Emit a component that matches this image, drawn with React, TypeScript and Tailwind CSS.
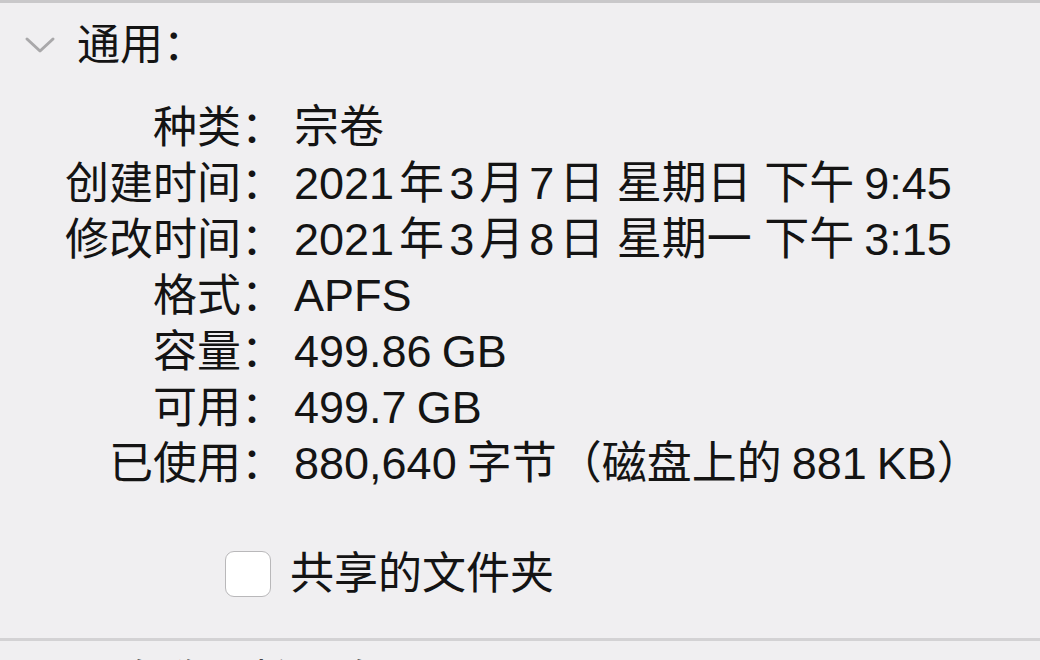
const rows: [string, string][] = [
  ["种类：", "宗卷"],
  ["创建时间：", "2021|年|3|月|7|日 星期日 下午^9:45"],
  ["修改时间：", "2021|年|3|月|8|日 星期一 下午^3:15"],
  ["格式：", "APFS"],
  ["容量：", "499.86^GB"],
  ["可用：", "499.7^GB"],
  ["已使用：", "880,640^字节（磁盘上的^881^KB）"],
];

// "|" = narrow gap, "^" = wider gap (macOS spacing between CJK and Latin)
function Value({ text }: { text: string }) {
  const parts = text.split(/([|^])/);
  return (
    <>
      {parts.map((p, i) =>
        p === "|" ? (
          <span key={i} className="inline-block w-[5px]" />
        ) : p === "^" ? (
          <span key={i} className="inline-block w-[10px]" />
        ) : (
          <span key={i}>{p}</span>
        )
      )}
    </>
  );
}

export default function App() {
  return (
    <div
      className="w-[1040px] h-[660px] overflow-hidden bg-[#f0eff1] text-[#141414] border-t-[3px] border-[#c9c8ca]"
      style={{ fontFamily: '"Liberation Sans", "Noto Sans CJK SC", sans-serif' }}
    >
      <div className="flex items-center h-[84px] pl-[24px]">
        <svg width="32" height="20" viewBox="0 0 32 20" className="shrink-0">
          <path d="M3 4 L16 16 L29 4" fill="none" stroke="#a9a8aa" strokeWidth="3" strokeLinecap="round" strokeLinejoin="round" />
        </svg>
        <span className="ml-[21px] text-[43px] leading-none">通用：</span>
      </div>

      <div className="grid grid-cols-[285px_1fr] gap-x-[9px] mt-[13px]">
        {rows.map(([label, value]) => (
          <div key={label} className="contents">
            <div className="text-right text-[44px] leading-[56px] whitespace-nowrap">{label}</div>
            <div className="text-[45px] leading-[56px] whitespace-nowrap">
              <Value text={value} />
            </div>
          </div>
        ))}
      </div>

      <div className="flex items-center mt-[54px] pl-[225px] h-[56px]">
        <div className="w-[46px] h-[46px] rounded-[9px] border border-[#b9b8ba] bg-white shrink-0" />
        <span className="ml-[19px] text-[44px] leading-none">共享的文件夹</span>
      </div>

      <div className="mt-[36px] border-t-[3px] border-[#d3d2d4]" />
      <div className="pl-[120px] pt-[19px] text-[44px] leading-none">名称与扩展名：</div>
    </div>
  );
}
